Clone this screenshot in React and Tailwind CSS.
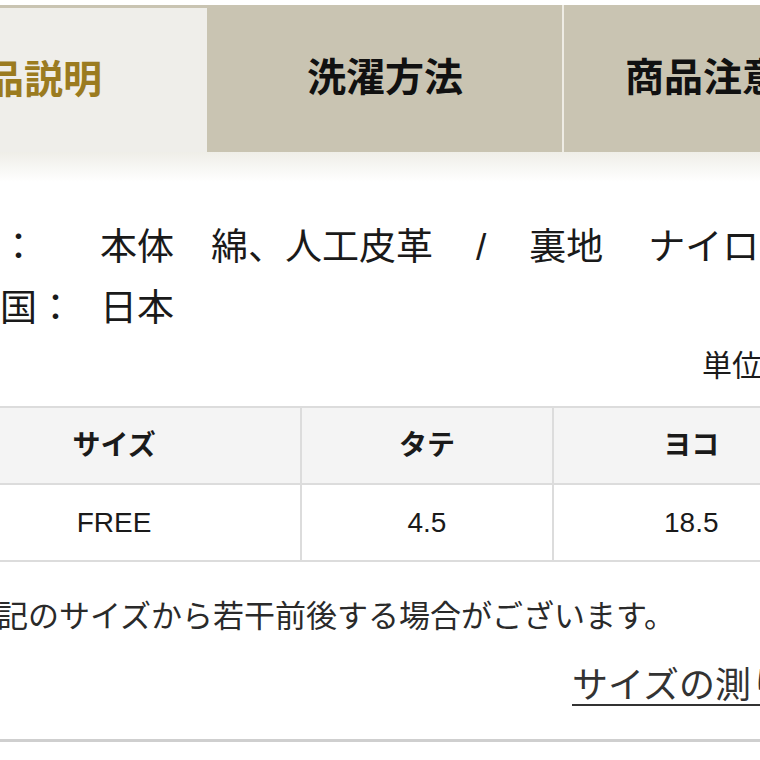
import React from 'react';

const tabs = [
  { label: '商品説明', active: true, width: 'w-[366px]' },
  { label: '洗濯方法', active: false, width: 'w-[356px]' },
  { label: '商品注意事項', active: false, width: 'w-[356px]' },
];

export default function App() {
  return (
    <div
      className="w-[760px] h-[760px] overflow-hidden bg-white text-[#1a1a1a]"
      style={{ fontFamily: '"Liberation Sans", "Noto Sans CJK JP", sans-serif' }}
    >
      <div className="h-[5px] bg-white" />

      <div className="flex h-[147px] w-[1100px] ml-[-159px] bg-[#c9c4b2]">
        {tabs.map((tab, i) => (
          <div
            key={tab.label}
            className={`${tab.width} shrink-0 flex items-center justify-center text-[39px] font-bold ${
              tab.active
                ? 'mt-[3px] bg-[#efeeea] text-[#9b7b20]'
                : 'text-[#111]'
            } ${i === 1 ? 'ml-[1px] border-r-2 border-[#eeece4]' : ''}`}
          >
            {tab.label}
          </div>
        ))}
      </div>

      <div className="h-[30px] bg-gradient-to-b from-[#efeee8] to-white" />

      <div className="ml-[-74px] w-[905px] pt-[35px]">
        <div className="flex text-[37px] leading-[61px] whitespace-nowrap">
          <span className="w-[174px] shrink-0">素材：</span>
          <span>
            本体　綿、人工皮革　<span className="px-[6px]">/</span>　裏地<span className="pl-[8px]">　ナイロン</span>
          </span>
        </div>
        <div className="flex text-[37px] leading-[61px] whitespace-nowrap">
          <span className="w-[174px] shrink-0">原産国：</span>
          <span>日本</span>
        </div>

        <div className="mt-[7px] pl-[776px] text-[30px] leading-[40px] whitespace-nowrap">
          単位：cm
        </div>

        <table className="mt-[20px] border-collapse text-[28px] text-center">
          <thead>
            <tr className="bg-[#f4f4f4] h-[77px]">
              <th className="w-[375px] border-2 border-[#dcdcdc] font-bold">サイズ</th>
              <th className="w-[252px] border-2 border-[#dcdcdc] font-bold">タテ</th>
              <th className="w-[278px] border-2 border-[#dcdcdc] font-bold">ヨコ</th>
            </tr>
          </thead>
          <tbody>
            <tr className="h-[77px]">
              <td className="border-2 border-[#dcdcdc]">FREE</td>
              <td className="border-2 border-[#dcdcdc]">4.5</td>
              <td className="border-2 border-[#dcdcdc]">18.5</td>
            </tr>
          </tbody>
        </table>

        <p className="mt-[33px] pl-[9px] text-[31px] leading-[44px] text-[#2a2a2a] whitespace-nowrap">
          ※上記のサイズから若干前後する場合がございます。
        </p>

        <div className="mt-[29px] pl-[646px] whitespace-nowrap">
          <a className="inline-block text-[36px] leading-[36px] text-[#333] border-b-2 border-[#333]">
            サイズの測り方
          </a>
        </div>
      </div>

      <div className="mt-[33px] h-[3px] bg-[#cfcfcf]" />
    </div>
  );
}
